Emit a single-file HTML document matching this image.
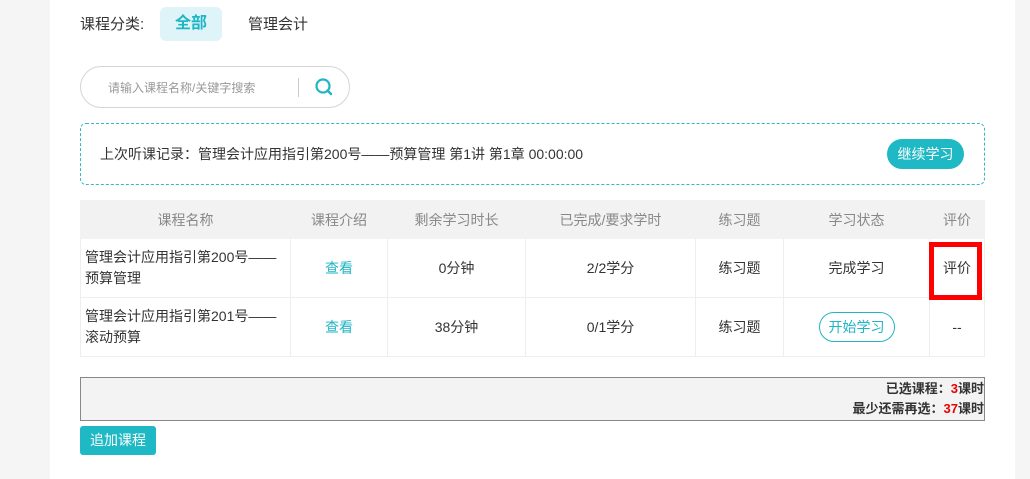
<!DOCTYPE html>
<html><head><meta charset="utf-8"><style>
*{margin:0;padding:0;box-sizing:border-box}
body{width:1030px;height:479px;background:#f5f5f5;font-family:"Liberation Sans","Noto Sans CJK SC",sans-serif;font-size:14px;color:#333;position:relative;overflow:hidden}
.main{position:absolute;left:50px;top:0;width:965px;height:479px;background:#fff}
.abs{position:absolute}
table{border-collapse:collapse;position:absolute;left:80px;top:200px;width:904px;table-layout:fixed}
td,th{border:1px solid #eee;text-align:center;font-weight:normal;font-size:14px}
th{background:#f2f2f2;color:#888;height:38px;border-color:#f2f2f2}
td{height:59px}
</style></head><body>
<div class="main"></div>
<div class="abs" style="left:80px;top:15px;font-size:15px;line-height:20px">课程分类:</div>
<div class="abs" style="left:160px;top:7px;width:62px;height:34px;background:#dff4f8;border-radius:6px;color:#1eb5c4;font-size:16px;font-weight:bold;text-align:center;line-height:34px">全部</div>
<div class="abs" style="left:248px;top:15px;font-size:15px;line-height:20px">管理会计</div>
<div class="abs" style="left:80px;top:66px;width:270px;height:42px;border:1px solid #d5d5d5;border-radius:21px"></div>
<div class="abs" style="left:108px;top:79px;font-size:12px;color:#999">请输入课程名称/关键字搜索</div>
<div class="abs" style="left:298px;top:78px;width:1px;height:19px;background:#ccc"></div>
<svg class="abs" style="left:314px;top:77px" width="20" height="20" viewBox="0 0 20 20"><circle cx="9" cy="9" r="6.5" fill="none" stroke="#1eb5c4" stroke-width="2.2"/><line x1="13.5" y1="13.5" x2="17" y2="17" stroke="#1eb5c4" stroke-width="2.4" stroke-linecap="round"/></svg>
<div class="abs" style="left:80px;top:123px;width:905px;height:62px;border:1px dashed #33b8c4;border-radius:6px"></div>
<div class="abs" style="left:100px;top:145px;font-size:14px;line-height:18px">上次听课记录：管理会计应用指引第200号——预算管理 第1讲 第1章 00:00:00</div>
<div class="abs" style="left:887px;top:139px;width:77px;height:30px;background:#1eb9c4;border-radius:15px;color:#fff;text-align:center;line-height:30px;font-size:14px">继续学习</div>
<table>
<colgroup><col style="width:210px"><col style="width:97px"><col style="width:138px"><col style="width:170px"><col style="width:88px"><col style="width:146px"><col style="width:55px"></colgroup>
<tr><th>课程名称</th><th>课程介绍</th><th>剩余学习时长</th><th>已完成/要求学时</th><th>练习题</th><th>学习状态</th><th>评价</th></tr>
<tr><td style="text-align:left;padding-left:4px;line-height:21px">管理会计应用指引第200号——预算管理</td><td style="color:#1eb5c4">查看</td><td>0分钟</td><td>2/2学分</td><td>练习题</td><td>完成学习</td><td>评价</td></tr>
<tr><td style="text-align:left;padding-left:4px;line-height:21px">管理会计应用指引第201号——滚动预算</td><td style="color:#1eb5c4">查看</td><td>38分钟</td><td>0/1学分</td><td>练习题</td><td><span style="display:inline-block;width:76px;height:30px;border:1px solid #1eb5c4;border-radius:15px;color:#1eb5c4;line-height:28px">开始学习</span></td><td>--</td></tr>
</table>
<div class="abs" style="left:929px;top:242px;width:53px;height:58px;border:5px solid #f00"></div>
<div class="abs" style="left:80px;top:377px;width:905px;height:44px;background:#f3f3f3;border:1px solid #888;text-align:right;font-weight:bold;font-size:13px;line-height:20px;padding-top:1px">已选课程：<span style="color:#e00">3</span>课时<br>最少还需再选：<span style="color:#e00">37</span>课时</div>
<div class="abs" style="left:80px;top:426px;width:76px;height:29px;background:#1eb9c4;border-radius:3px;color:#fff;text-align:center;line-height:29px;font-size:14px">追加课程</div>
</body></html>
